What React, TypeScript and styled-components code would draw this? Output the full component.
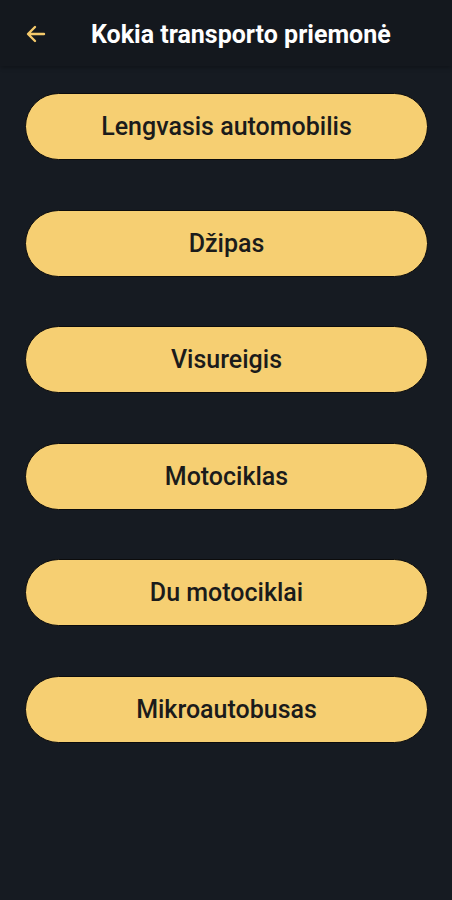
import React from "react";
import styled, { createGlobalStyle } from "styled-components";

const GlobalStyle = createGlobalStyle`
  html, body {
    margin: 0;
    padding: 0;
    background: #161b22;
  }
  body {
    font-family: Roboto, "Noto Sans", sans-serif;
  }
`;

const vehicles = [
  "Lengvasis automobilis",
  "Džipas",
  "Visureigis",
  "Motociklas",
  "Du motociklai",
  "Mikroautobusas",
];

export default function App() {
  return (
    <Screen>
      <GlobalStyle />
      <TopBar>
        <BackButton aria-label="Atgal">
          <svg width="24" height="24" viewBox="0 0 24 24" fill="none">
            <path
              d="M20 12H5M11 5l-7 7 7 7"
              stroke="#f4c96b"
              strokeWidth="2.4"
              strokeLinecap="round"
              strokeLinejoin="round"
            />
          </svg>
        </BackButton>
        <Title>Kokia transporto priemonė</Title>
      </TopBar>
      <List>
        {vehicles.map((v) => (
          <Choice key={v}>{v}</Choice>
        ))}
      </List>
    </Screen>
  );
}

const Screen = styled.div`
  min-height: 100vh;
  background: #161b22;
  display: flex;
  flex-direction: column;
`;

const TopBar = styled.header`
  height: 66px;
  display: flex;
  align-items: center;
  padding: 2px 24px 0 23px;
  box-sizing: border-box;
  gap: 42px;
  background: #14181e;
  box-shadow: 0 2px 4px rgba(0, 0, 0, 0.25);
`;

const BackButton = styled.button`
  background: none;
  border: none;
  padding: 0;
  width: 26px;
  height: 26px;
  display: flex;
  align-items: center;
  justify-content: center;
  cursor: pointer;
`;

const Title = styled.h1`
  margin: 0;
  color: #ffffff;
  font-size: 25px;
  font-weight: 700;
  letter-spacing: 0;
`;

const List = styled.main`
  display: flex;
  flex-direction: column;
  gap: 49.6px;
  padding: 27px 24px 0 25px;
`;

const Choice = styled.button`
  height: 67px;
  border-radius: 34px;
  border: 1.5px solid #0c0c0c;
  background: #f6cf72;
  color: #1b1b1b;
  font-family: Roboto, "Noto Sans", sans-serif;
  font-size: 25px;
  font-weight: 500;
  cursor: pointer;
`;
